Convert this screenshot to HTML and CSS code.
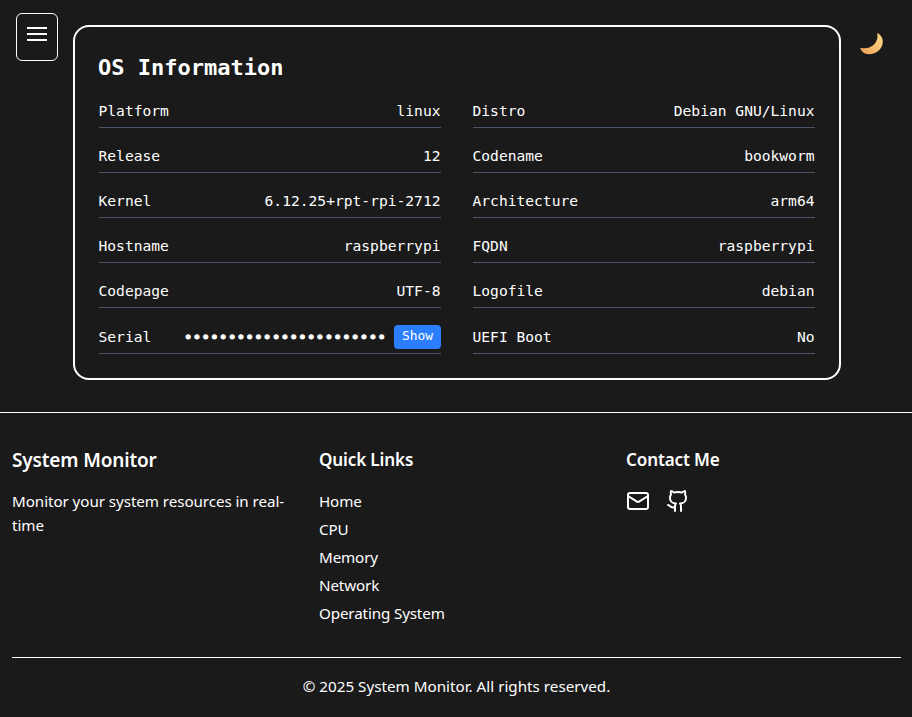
FILE: index.html
```html
<!DOCTYPE html>
<html lang="en">
<head>
<meta charset="utf-8">
<title>System Monitor</title>
<link rel="stylesheet" href="styles.css">
</head>
<body>
<main class="main">
  <button class="menu" aria-label="Menu"><span class="bar"></span><span class="bar"></span><span class="bar"></span></button>
  <section class="card">
    <h2 class="card-title">OS Information</h2>
    <div class="info">
      <div class="row"><span>Platform</span><span>linux</span></div>
      <div class="row"><span>Distro</span><span>Debian GNU/Linux</span></div>
      <div class="row"><span>Release</span><span>12</span></div>
      <div class="row"><span>Codename</span><span>bookworm</span></div>
      <div class="row"><span>Kernel</span><span>6.12.25+rpt-rpi-2712</span></div>
      <div class="row"><span>Architecture</span><span>arm64</span></div>
      <div class="row"><span>Hostname</span><span>raspberrypi</span></div>
      <div class="row"><span>FQDN</span><span>raspberrypi</span></div>
      <div class="row"><span>Codepage</span><span>UTF-8</span></div>
      <div class="row"><span>Logofile</span><span>debian</span></div>
      <div class="row tall"><span>Serial</span><div class="serial"><span class="dots">•••••••••••••••••••••••</span><button class="show">Show</button></div></div>
      <div class="row tall"><span>UEFI Boot</span><span>No</span></div>
    </div>
  </section>
  <button class="theme" aria-label="Theme">
    <svg width="24" height="24" viewBox="0 0 24 24">
      <defs><linearGradient id="moon" x1="0" y1="1" x2="1" y2="0"><stop offset="0" stop-color="#f0a058"/><stop offset="1" stop-color="#ffdc88"/></linearGradient></defs>
      <path fill="url(#moon)" d="M17.300 1C21.500 3 23.800 7.500 22.400 12.500C20.500 20 12 24 5 21.500C2.500 20.500 .6 18 .2 15.800C5.500 17.300 11 15.800 14.500 12C17.300 8.800 18 5 17.300 1Z"/>
    </svg>
  </button>
</main>
<footer class="footer">
  <div class="cols">
    <div>
      <h2 class="brand">System Monitor</h2>
      <p class="about">Monitor your system resources in real-<wbr>time</p>
    </div>
    <div>
      <h3 class="head">Quick Links</h3>
      <ul class="links">
        <li>Home</li><li>CPU</li><li>Memory</li><li>Network</li><li>Operating System</li>
      </ul>
    </div>
    <div>
      <h3 class="head">Contact Me</h3>
      <div class="icons">
        <svg class="icon" viewBox="0 0 24 24"><rect x="2" y="4" width="20" height="16" rx="2"/><path d="m22 7-8.970 5.700a1.940 1.940 0 0 1-2.060 0L2 7"/></svg>
        <svg class="icon" viewBox="0 0 24 24"><path d="M15 22v-4a4.800 4.800 0 0 0-1-3.500c3 0 6-2 6-5.500.08-1.250-.27-2.480-1-3.500.28-1.150.28-2.350 0-3.500 0 0-1 0-3 1.500-2.640-.5-5.360-.5-8 0C6 2 5 2 5 2c-.3 1.150-.3 2.350 0 3.500A5.403 5.403 0 0 0 4 9c0 3.500 3 5.500 6 5.500-.39.49-.68 1.050-.85 1.650-.17.6-.22 1.230-.15 1.850v4"/><path d="M9 18c-4.510 2-5-2-7-2"/></svg>
      </div>
    </div>
  </div>
  <p class="copy">© 2025 System Monitor. All rights reserved.</p>
</footer>
</body>
</html>
```
FILE: styles.css
```css
* { box-sizing: border-box; margin: 0; padding: 0; }
body { background: #1a1a1a; color: #fff; font: 15.200px/24px "Noto Sans", "Open Sans", sans-serif; }
button { font: inherit; color: inherit; background: none; border: 0; }
.main { display: flex; align-items: flex-start; padding: 13px 0 32px 16px; }
.menu { width: 42px; height: 48px; border: 1px solid #fff; border-radius: 6px; display: flex; flex-direction: column; align-items: center; gap: 4px; padding-top: 13px; }
.bar { width: 20px; height: 2px; background: #fff; }
.card { width: 768px; height: 355px; margin: 12px 0 0 15px; padding: 24px; border: 2px solid #fff; border-radius: 16px; font: 14.620px/24px "DejaVu Sans Mono", monospace; }
.card-title { font-size: 22px; line-height: 32px; padding-top: 1px; height: 32px; margin: 0 0 16px -1px; }
.info { display: grid; grid-template-columns: 1fr 1fr; column-gap: 32px; row-gap: 16px; }
.row { display: flex; justify-content: space-between; height: 29px; border-bottom: 1px solid #4a5565; }
.row > span:first-child { margin-left: -0.500px; }
.row > span:last-child { margin-right: 0.500px; }
.row.tall { height: 30px; line-height: 26px; }
.serial { display: flex; gap: 8px; }
.dots { line-height: 25px; -webkit-text-stroke: 1px #fff; }
.show { height: 24px; width: 47px; margin-top: 1px; border-radius: 4px; background: #2b7fff; font-size: 12.900px; line-height: 22px; padding-bottom: 2px; }
.theme { width: 24px; height: 24px; margin: 19px 0 0 19px; }
.theme svg { display: block; }
.footer { border-top: 1px solid #fff; padding: 32px 11px 19px 12px; }
.cols { display: grid; grid-template-columns: repeat(3, 1fr); gap: 32px; margin-bottom: 32px; }
.brand, .head { font-weight: 600; line-height: 28px; height: 28px; margin-bottom: 16px; padding-top: 1px; letter-spacing: -0.150px; }
.brand { font-size: 19px; }
.head { font-size: 17.100px; }
.about { letter-spacing: -0.070px; }
.links { letter-spacing: -0.140px; list-style: none; display: grid; gap: 4px; }
.icons { display: flex; gap: 16px; }
.icon { width: 24px; height: 24px; fill: none; stroke: #fff; stroke-width: 2; stroke-linecap: round; stroke-linejoin: round; }
.copy { border-top: 1px solid #fff; padding-top: 16px; text-align: center; letter-spacing: 0.010px; }
```
